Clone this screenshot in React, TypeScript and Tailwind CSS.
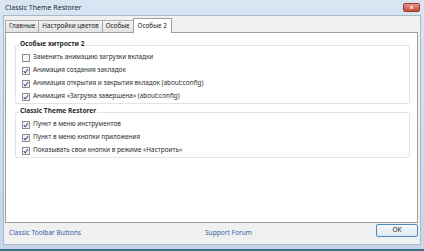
import * as React from 'react';

const font = { fontFamily: '"Noto Sans", "Open Sans", sans-serif' };

function Check({ checked }: { checked: boolean }) {
  return (
    <span className="w-[8px] h-[8px] border border-[#8f8f8f] bg-[#f4f4f4] flex items-center justify-center shrink-0">
      {checked && (
        <svg width="6" height="6" viewBox="0 0 6 6">
          <path d="M0.8 3.2 L2.3 4.8 L5.2 1" stroke="#3b5a9a" strokeWidth="1.1" fill="none" />
        </svg>
      )}
    </span>
  );
}

function Item({ label, checked }: { label: string; checked: boolean }) {
  return (
    <div className="flex items-center gap-[3px] h-[13px] pl-[6px]">
      <Check checked={checked} />
      <span className="text-[6.4px] text-[#2a2a2a] leading-none whitespace-nowrap">{label}</span>
    </div>
  );
}

function Group({ title, items }: { title: string; items: [string, boolean][] }) {
  return (
    <div className="relative border border-[#e3e3e3] rounded-[2px] pt-[5px]">
      <span className="absolute left-[3px] top-[-5px] bg-white px-[1px] text-[6.6px] font-bold text-[#2a2a2a] leading-none">
        {title}
      </span>
      {items.map(([label, checked]) => (
        <Item key={label} label={label} checked={checked} />
      ))}
    </div>
  );
}

export default function App() {
  const tabs = ['Главные', 'Настройки цветов', 'Особые', 'Особые 2'];

  return (
    <div
      className="w-[424px] h-[251px] flex flex-col bg-gradient-to-b from-[#d9e5f2] to-[#c6d6e8] border-b-[2px] border-[#3f6f8c] overflow-hidden"
      style={font}
    >
      {/* Title bar */}
      <div className="h-[15px] flex items-center justify-between pl-[5px] pr-[4px] shrink-0">
        <span className="text-[7px] text-[#1e2b3a] leading-none">Classic Theme Restorer</span>
        <span className="w-[17px] h-[9px] rounded-[2px] bg-gradient-to-b from-[#e49a8c] to-[#c8493a] border border-[#9a3b30] flex items-center justify-center text-white text-[7px] font-bold leading-none">
          ×
        </span>
      </div>

      {/* Client area */}
      <div className="flex-1 mx-[3px] mb-[4px] bg-[#f0f0f0] border border-[#a9b8c8] flex flex-col pl-[1px] pr-[2px] pt-[1px]">
        {/* Tabs */}
        <div className="flex items-end h-[15px] shrink-0">
          {tabs.map((t, i) =>
            i === tabs.length - 1 ? (
              <div
                key={t}
                className="h-[15px] px-[4px] bg-white border border-[#9f9f9f] border-b-0 -mb-px relative z-10 flex items-center text-[6.4px] text-[#222] leading-none -ml-px"
              >
                {t}
              </div>
            ) : (
              <div
                key={t}
                className={`h-[12px] px-[3px] bg-gradient-to-b from-[#f2f2f2] to-[#e3e3e3] border border-[#acacac] border-b-0 flex items-center text-[6.4px] text-[#222] leading-none ${i > 0 ? '-ml-px' : ''}`}
              >
                {t}
              </div>
            )
          )}
        </div>

        {/* Panel */}
        <div className="h-[191px] bg-white border border-[#9f9f9f] shrink-0 pl-[9px] pr-[7px] pt-[12px] flex flex-col gap-[8px]">
          <Group
            title="Особые хитрости 2"
            items={[
              ['Заменить анимацию загрузки вкладки', false],
              ['Анимация создания закладок', true],
              ['Анимация открытия и закрытия вкладок (about:config)', true],
              ['Анимация «Загрузка завершена» (about:config)', true],
            ]}
          />
          <Group
            title="Classic Theme Restorer"
            items={[
              ['Пункт в меню инструментов', true],
              ['Пункт в меню кнопки приложения', true],
              ['Показывать свои кнопки в режиме «Настроить»', true],
            ]}
          />
        </div>

        {/* Footer */}
        <div className="flex-1 flex items-start pt-[5px] pl-[4px]">
          <span className="text-[6.6px] text-[#2f5fa6] leading-none w-[196px] mt-[2px]">Classic Toolbar Buttons</span>
          <span className="text-[6.6px] text-[#2f5fa6] leading-none mt-[2px]">Support Forum</span>
          <button className="ml-auto -mt-[4px] w-[42px] h-[13px] rounded-[2px] border border-[#4f8ab8] bg-gradient-to-b from-[#f4f8fb] to-[#dde8f1] text-[6.6px] text-[#222] leading-none">
            OK
          </button>
        </div>
      </div>
    </div>
  );
}
